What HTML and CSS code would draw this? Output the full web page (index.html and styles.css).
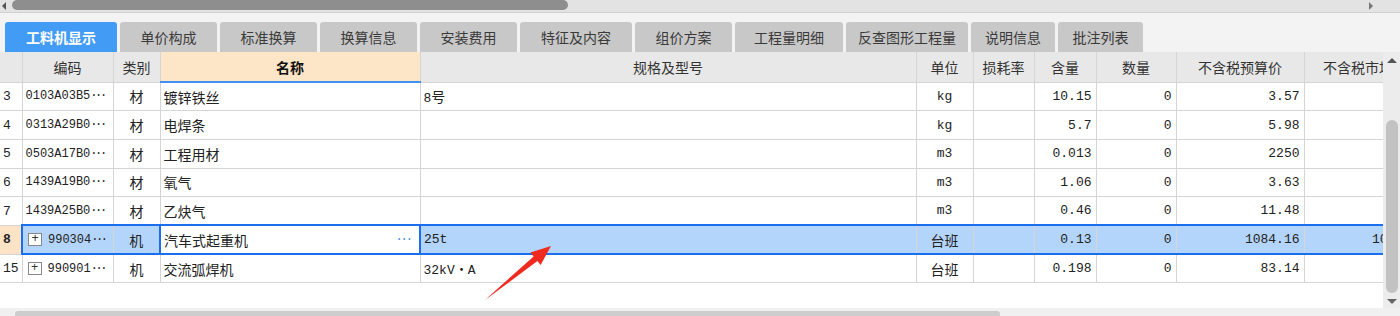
FILE: index.html
```html
<!DOCTYPE html>
<html lang="zh-CN">
<head>
<meta charset="utf-8" />
<title>工料机显示</title>
<link rel="stylesheet" href="styles.css">
</head>
<body>
<div class="topbar">
  <span class="tri-left"></span>
  <div class="top-thumb"></div>
  <span class="tri-right"></span>
</div>
<div class="tabbar">
  <div class="tab active w112">工料机显示</div>
  <div class="tab w97">单价构成</div>
  <div class="tab w97">标准换算</div>
  <div class="tab w97">换算信息</div>
  <div class="tab w97">安装费用</div>
  <div class="tab w112">特征及内容</div>
  <div class="tab w97">组价方案</div>
  <div class="tab w108">工程量明细</div>
  <div class="tab w122">反查图形工程量</div>
  <div class="tab w84">说明信息</div>
  <div class="tab w85">批注列表</div>
</div>
<div class="main">
  <div class="grid">
    <table class="sheet">
      <colgroup>
        <col class="c-idx"><col class="c-code"><col class="c-type"><col class="c-name"><col class="c-spec">
        <col class="c-unit"><col class="c-loss"><col class="c-qty"><col class="c-amt"><col class="c-price"><col class="c-mkt">
      </colgroup>
      <thead>
        <tr>
          <th class="idx"></th><th>编码</th><th>类别</th><th class="cur">名称</th><th>规格及型号</th>
          <th>单位</th><th>损耗率</th><th>含量</th><th>数量</th><th>不含税预算价</th><th class="mkt">不含税市场价</th>
        </tr>
      </thead>
      <tbody>
        <tr>
          <td class="idx">3</td><td class="code">0103A03B5<span class="ell">···</span></td><td class="ctr">材</td><td>镀锌铁丝</td><td><span class="mono">8</span>号</td>
          <td class="ctr mono">kg</td><td></td><td class="num">10.15</td><td class="num">0</td><td class="num">3.57</td><td class="num mk"></td>
        </tr>
        <tr>
          <td class="idx">4</td><td class="code">0313A29B0<span class="ell">···</span></td><td class="ctr">材</td><td>电焊条</td><td></td>
          <td class="ctr mono">kg</td><td></td><td class="num">5.7</td><td class="num">0</td><td class="num">5.98</td><td class="num mk"></td>
        </tr>
        <tr>
          <td class="idx">5</td><td class="code">0503A17B0<span class="ell">···</span></td><td class="ctr">材</td><td>工程用材</td><td></td>
          <td class="ctr mono">m3</td><td></td><td class="num">0.013</td><td class="num">0</td><td class="num">2250</td><td class="num mk"></td>
        </tr>
        <tr>
          <td class="idx">6</td><td class="code">1439A19B0<span class="ell">···</span></td><td class="ctr">材</td><td>氧气</td><td></td>
          <td class="ctr mono">m3</td><td></td><td class="num">1.06</td><td class="num">0</td><td class="num">3.63</td><td class="num mk"></td>
        </tr>
        <tr>
          <td class="idx">7</td><td class="code">1439A25B0<span class="ell">···</span></td><td class="ctr">材</td><td>乙炔气</td><td></td>
          <td class="ctr mono">m3</td><td></td><td class="num">0.46</td><td class="num">0</td><td class="num">11.48</td><td class="num mk"></td>
        </tr>
        <tr class="sel">
          <td class="idx">8</td><td class="code"><span class="plus">+</span>990304<span class="ell">···</span></td><td class="ctr">机</td>
          <td class="edit"><div class="edit-in"><span>汽车式起重机</span><span class="dots">···</span></div></td>
          <td class="mono">25t</td>
          <td class="ctr">台班</td><td></td><td class="num">0.13</td><td class="num">0</td><td class="num">1084.16</td><td class="num mk">1084.16</td>
        </tr>
        <tr>
          <td class="idx">15</td><td class="code"><span class="plus">+</span>990901<span class="ell">···</span></td><td class="ctr">机</td><td>交流弧焊机</td><td class="mono">32kV・A</td>
          <td class="ctr">台班</td><td></td><td class="num">0.198</td><td class="num">0</td><td class="num">83.14</td><td class="num mk"></td>
        </tr>
      </tbody>
    </table>
  </div>
  <div class="vbar">
    <span class="tri-up"></span>
    <div class="v-thumb"></div>
    <span class="tri-down"></span>
  </div>
</div>
<div class="bottombar">
  <div class="b-thumb"></div>
</div>
<svg class="pointer" width="1400" height="316" viewBox="0 0 1400 316">
  <polygon points="485,300 537.4,261 540.6,264.9 551,246 530.4,252.5 533.6,256.4" fill="#ef2a1f" />
</svg>
</body>
</html>
```

FILE: styles.css
```css
:root {
  --line: #d5d5d5;
  --head-bg: #e8e8e8;
  --sel-blue: #1b6fee;
  --sel-bg: #b4d5fb;
  --peach: #fde5c8;
  --mono: "Liberation Mono", monospace;
}
*{box-sizing:border-box;}
body{
  margin:0;
  width:1400px;
  height:316px;
  overflow:hidden;
  position:relative;
  background:#fff;
  color:#222;
  font-family:"Noto Sans CJK SC",sans-serif;
}

/* top horizontal scrollbar */
.topbar{height:13px;background:#e3e3e3;border-bottom:1px solid #d0d0d0;display:flex;align-items:flex-start;padding-left:2px;}
.tri-left{width:0;height:0;margin-top:2px;border-top:4px solid transparent;border-bottom:4px solid transparent;border-right:4px solid #555;}
.top-thumb{width:556px;height:10px;margin-left:6px;background:#8e8e8e;border-radius:5px;}
.tri-right{width:0;height:0;margin-top:2px;margin-left:801px;border-top:4px solid transparent;border-bottom:4px solid transparent;border-left:4px solid #777;}

/* tabs */
.tabbar{height:39px;background:#f3f3f3;display:flex;align-items:flex-end;gap:3px;padding-left:5px;}
.tab{height:30px;background:#c8c8c8;border-radius:3px 3px 0 0;font-size:14px;color:#3a3a3a;display:flex;align-items:center;justify-content:center;}
.tab.active{background:#429cf6;color:#fff;font-weight:bold;}
.w84{width:84px;}.w85{width:85px;}.w97{width:97px;}.w108{width:108px;}.w112{width:112px;}.w122{width:122px;}

/* grid */
.main{display:flex;height:256px;}
.grid{width:1383px;flex:none;overflow:hidden;background:#fff;}
.sheet{border-collapse:collapse;table-layout:fixed;width:1437px;}
.c-idx{width:22px;}.c-code{width:91px;}.c-type{width:47px;}.c-name{width:260px;}.c-spec{width:496px;}
.c-unit{width:57px;}.c-loss{width:61px;}.c-qty{width:62px;}.c-amt{width:80px;}.c-price{width:128px;}.c-mkt{width:133px;}
.sheet th,.sheet td{border:1px solid var(--line);padding:0 3px;white-space:nowrap;overflow:hidden;}
.sheet th{height:30px;background:var(--head-bg);font-size:14px;font-weight:normal;color:#333;border-top:none;}
.sheet th.idx{border-left:none;}
.sheet th.mkt{padding-right:14px;}
.sheet th.cur{background:var(--peach);font-weight:bold;color:#111;border-bottom:2px solid #3d8ff0;}
.sheet td{height:28.7px;font-size:14px;}
.sheet td.idx{border-left:none;padding-left:3px;font-family:var(--mono);font-size:13px;}
.sheet td.code{font-family:var(--mono);font-size:12px;padding-right:0;}
.sheet .mono{font-family:var(--mono);font-size:13px;}
.sheet td.num{font-family:var(--mono);font-size:13px;text-align:right;padding-right:4px;}
.sheet td.mk{padding-right:10px;}
.ell{letter-spacing:-2.4px;}
.ctr{text-align:center;}
.plus{display:inline-block;width:14px;height:13px;border:1px solid #888;margin:0 6px 0 2px;font-size:12px;line-height:11px;text-align:center;vertical-align:middle;background:#fff;color:#333;}

/* selected row */
.sel td{background:var(--sel-bg);border-top:2px solid var(--sel-blue);border-bottom:2px solid var(--sel-blue);}
.sheet .sel td.code{border-left:2px solid var(--sel-blue);}
.sheet .sel td.idx{background:#fde3c5;font-weight:bold;border-top:1px solid var(--line);border-bottom:1px solid var(--line);}
.sheet .sel td.edit{background:#fff;border:2px solid var(--sel-blue);}
.edit-in{display:flex;justify-content:space-between;align-items:center;}
.dots{color:#3c8be6;font-family:var(--mono);font-size:12px;letter-spacing:-2px;margin-right:5px;}

/* vertical scrollbar */
.vbar{width:17px;flex:none;background:#ececec;display:flex;flex-direction:column;align-items:center;padding:6px 0 4px;}
.tri-up{width:0;height:0;border-left:5px solid transparent;border-right:5px solid transparent;border-bottom:5px solid #555;}
.v-thumb{width:12px;height:173px;margin-top:57px;background:#c2c2c2;border-radius:6px;}
.tri-down{width:0;height:0;margin-top:auto;border-left:5px solid transparent;border-right:5px solid transparent;border-top:5px solid #666;}

/* bottom scrollbar */
.bottombar{height:8px;background:#f0f0f0;display:flex;align-items:flex-end;}
.b-thumb{width:985px;height:5px;margin-left:15px;background:#cdcdcd;border-radius:3px 3px 0 0;}

.pointer{position:absolute;left:0;top:0;pointer-events:none;}
```
